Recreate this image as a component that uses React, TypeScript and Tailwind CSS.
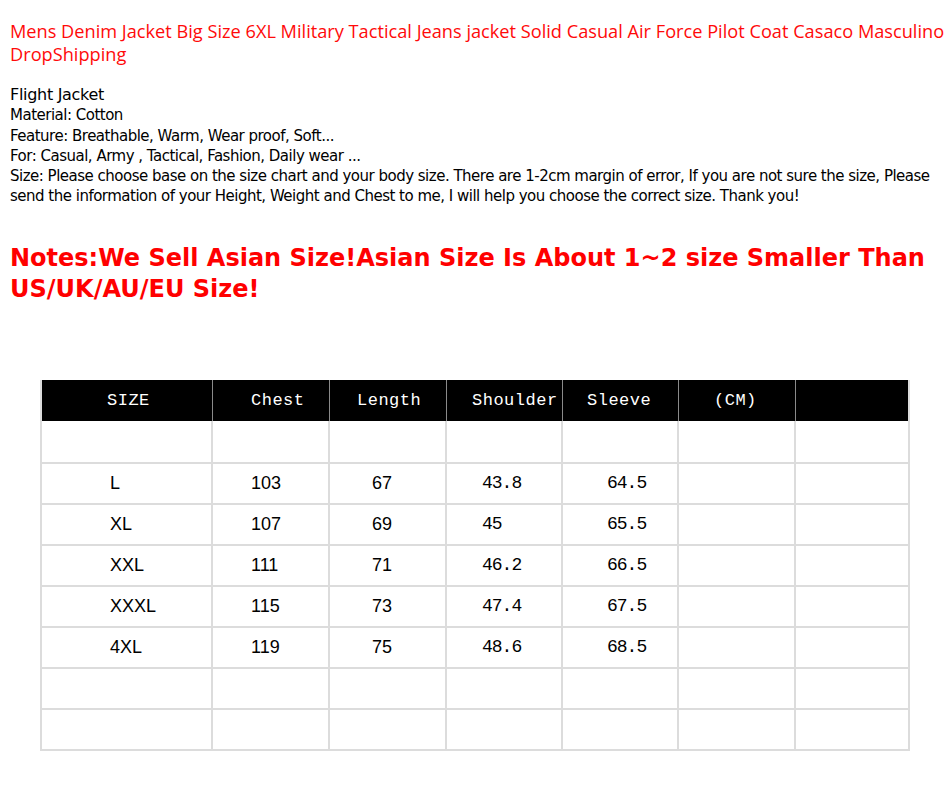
import React from 'react';

const rows = [
  ['', '', '', '', '', '', ''],
  ['L', '103', '67', '43.8', '64.5', '', ''],
  ['XL', '107', '69', '45', '65.5', '', ''],
  ['XXL', '111', '71', '46.2', '66.5', '', ''],
  ['XXXL', '115', '73', '47.4', '67.5', '', ''],
  ['4XL', '119', '75', '48.6', '68.5', '', ''],
  ['', '', '', '', '', '', ''],
  ['', '', '', '', '', '', ''],
];

const headers = ['SIZE', 'Chest', 'Length', 'Shoulder', 'Sleeve', '(CM)', ''];
const headPad = ['pl-[65px]', 'pl-[38px]', 'pl-[27px]', 'pl-[25px]', 'pl-[24px]', 'pl-[35px]', ''];
const cellPad = ['pl-[68px]', 'pl-[38px]', 'pl-[42px]', 'pl-[35px]', 'pl-[44px]', '', ''];

const App = () => {
  return (
    <div className="bg-white w-[950px] min-h-[800px] pl-[10px]">
      <h1 className="pt-[20px] text-[18.2px] leading-[23px] text-[#ff0a0a] font-['Open_Sans',sans-serif] font-normal">
        Mens Denim Jacket Big Size 6XL Military Tactical Jeans jacket Solid Casual Air Force Pilot Coat Casaco Masculino DropShipping
      </h1>

      <div className="mt-[19px] text-[15px] leading-[20.3px] text-black font-['DejaVu_Sans',sans-serif] tracking-[-0.5px]">
        <p className="text-[16px] tracking-[-0.3px]">Flight Jacket</p>
        <p>Material: Cotton</p>
        <p>Feature: Breathable, Warm, Wear proof, Soft...</p>
        <p>For: Casual, Army , Tactical, Fashion, Daily wear ...</p>
        <p>
          Size: Please choose base on the size chart and your body size. There are 1-2cm margin of error, If you are not sure the size, Please send the information of your Height, Weight and Chest to me, I will help you choose the correct size. Thank you!
        </p>
      </div>

      <p className="mt-[36px] pr-[5px] text-[24px] leading-[31px] font-bold text-[#ff0000] font-['DejaVu_Sans',sans-serif]">
        Notes:We Sell Asian Size!Asian Size Is About 1~2 size Smaller Than US/UK/AU/EU Size!
      </p>

      <div className="mt-[75px] ml-[30px] w-[870px] border-l-2 border-r-2 border-b-2 border-[#dcdcdc]">
        <div className="grid grid-cols-[171px_117px_117px_116px_116px_117px_1fr] h-[41px] bg-black">
          {headers.map((h, i) => (
            <div
              key={i}
              className={`flex items-center text-white text-[17px] tracking-[0.5px] font-['Liberation_Mono',monospace] ${headPad[i]} ${i < 6 ? 'border-r border-[#8a8a8a]' : ''}`}
            >
              {h}
            </div>
          ))}
        </div>
        {rows.map((r, ri) => (
          <div
            key={ri}
            className={`grid grid-cols-[171px_117px_117px_116px_116px_117px_1fr] h-[41px] ${ri > 0 ? 'border-t-2 border-[#dcdcdc]' : ''}`}
          >
            {r.map((c, ci) => (
              <div
                key={ci}
                className={`flex items-center text-[18px] text-black ${ci === 3 || ci === 4 ? "font-['Liberation_Mono',monospace] tracking-[-1px]" : "font-['Liberation_Sans',sans-serif]"} ${cellPad[ci]} ${ci < 6 ? 'border-r-2 border-[#dcdcdc]' : ''}`}
              >
                {c}
              </div>
            ))}
          </div>
        ))}
      </div>
    </div>
  );
};

export default App;
